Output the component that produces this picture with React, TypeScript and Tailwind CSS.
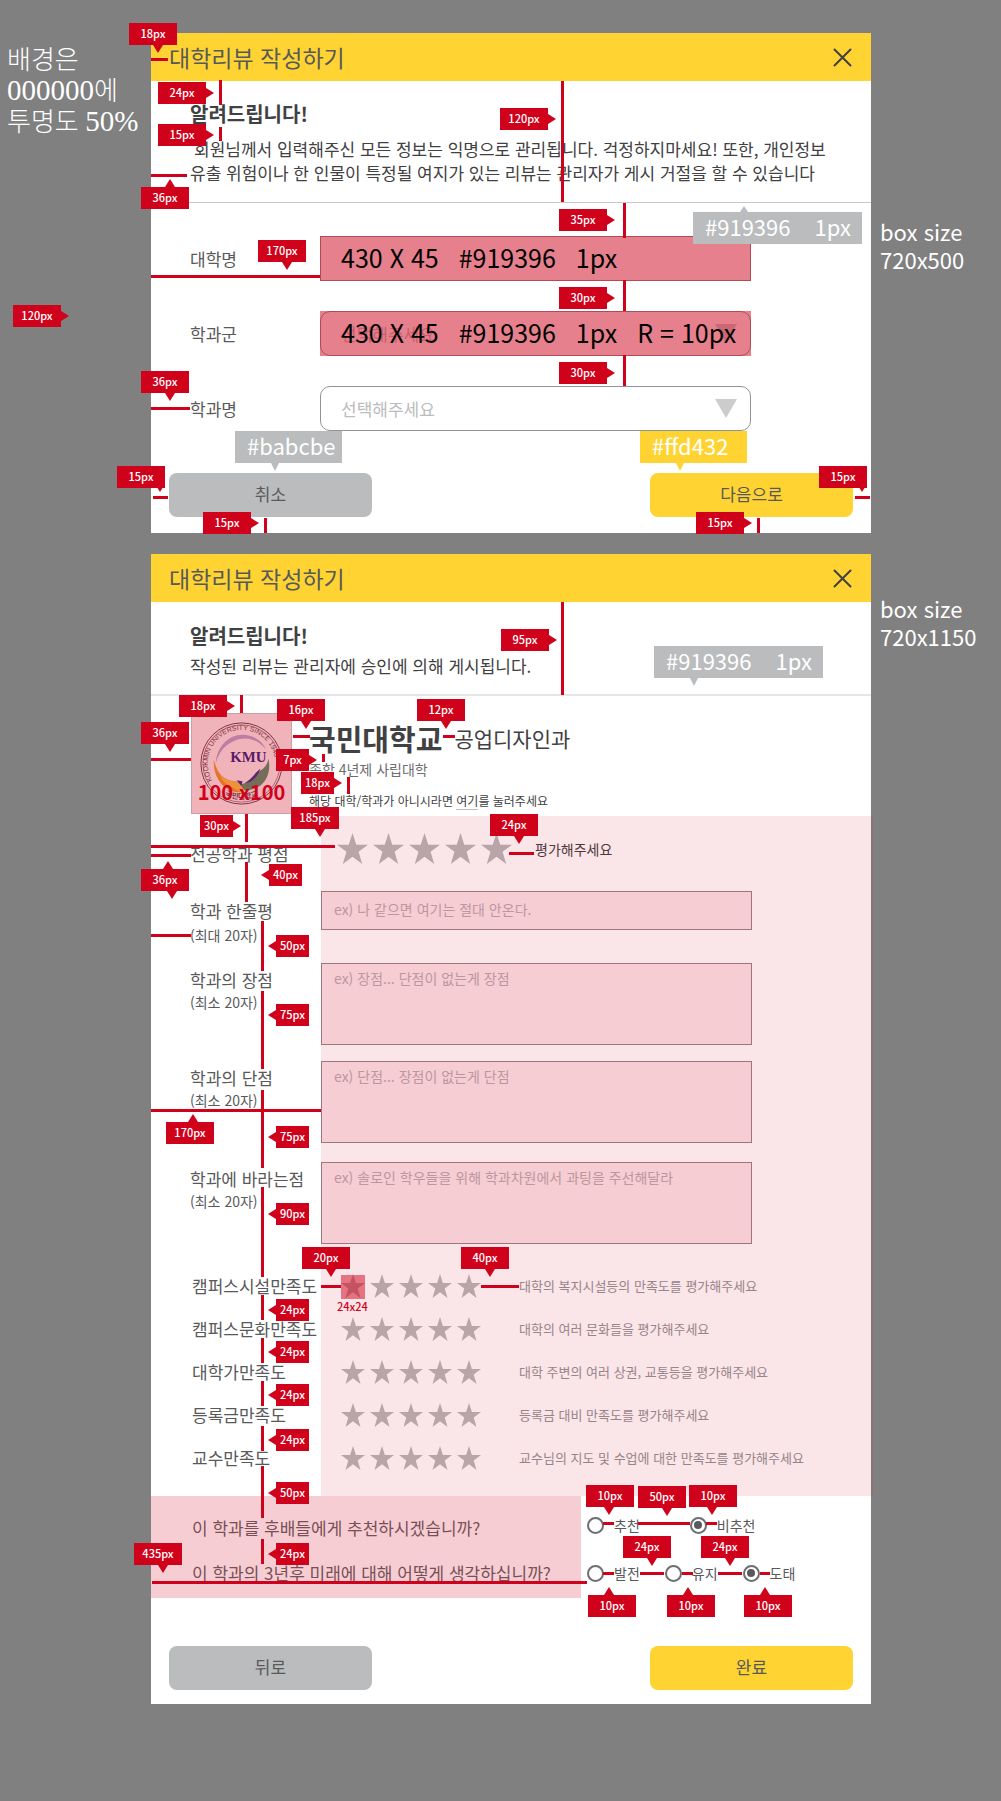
import React from "react";

type Direction = "left" | "right" | "up" | "down";
type TagData = { label: string; dir: Direction; at: string; arrow?: string; narrow?: boolean };

const arrowShape: Record<Direction, string> = {
  right: "left-full top-1.5 border-y-[5px] border-l-8 border-y-transparent border-l-[#d0021b]",
  left: "right-full top-1.5 border-y-[5px] border-r-8 border-y-transparent border-r-[#d0021b]",
  up: "bottom-full border-x-[5px] border-b-8 border-x-transparent border-b-[#d0021b]",
  down: "top-full border-x-[5px] border-t-8 border-x-transparent border-t-[#d0021b]",
};

function Tag({ label, dir, at, arrow = "left-6", narrow }: TagData) {
  const vertical = dir === "up" || dir === "down";
  return (
    <div
      className={`absolute flex h-[22px] items-center justify-center bg-[#d0021b] pb-0.5 text-[11px] leading-none font-medium text-white ${narrow ? "w-[33px]" : "w-12"} ${at}`}
    >
      {label}
      <span className={`absolute ${arrowShape[dir]} ${vertical ? arrow : ""}`} />
    </div>
  );
}

function Annotations({ tags, lines, children }: { tags: TagData[]; lines: string[]; children?: React.ReactNode }) {
  return (
    <div className="pointer-events-none absolute inset-0">
      {lines.map((l) => (
        <span key={l} className={`absolute bg-[#d0021b] ${l}`} />
      ))}
      {children}
      {tags.map((t) => (
        <Tag key={t.at} {...t} />
      ))}
    </div>
  );
}

function ColorTag({ at, color, arrow, children }: { at: string; color: string; arrow: string; children: React.ReactNode }) {
  return (
    <div className={`absolute flex h-8 items-center gap-6 px-3 pb-1 text-[22px] leading-none whitespace-nowrap text-white ${color} ${at}`}>
      {children}
      <span className={`absolute border-x-4 border-x-transparent ${arrow}`} />
    </div>
  );
}

function Header() {
  return (
    <header className="flex h-12 items-center justify-between bg-[#ffd432] pr-[19px] pl-[18px]">
      <h2 className="text-[23px] leading-8 text-[#58595b]">대학리뷰 작성하기</h2>
      <button type="button" aria-label="닫기">
        <svg width="19" height="19" viewBox="0 0 19 19" stroke="#414042" strokeWidth="2" strokeLinecap="round">
          <path d="M1.5 1.5 17.5 17.5M17.5 1.5 1.5 17.5" />
        </svg>
      </button>
    </header>
  );
}

function Actions({ back, next }: { back: string; next: string }) {
  return (
    <div className="flex justify-between px-[18px]">
      <button type="button" className="h-11 w-[203px] rounded-lg bg-[#babcbe] pb-0.5 text-[17px] text-[#58595b]">
        {back}
      </button>
      <button type="button" className="h-11 w-[203px] rounded-lg bg-[#ffd432] pb-0.5 text-[17px] text-[#58595b]">
        {next}
      </button>
    </div>
  );
}

function SelectField({ id }: { id: string }) {
  return (
    <div className="relative">
      <select
        id={id}
        defaultValue=""
        className="h-[45px] w-full appearance-none rounded-[10px] border border-[#919396] bg-white px-5 text-[17px] text-[#babcbe]"
      >
        <option value="">선택해주세요</option>
      </select>
      <svg className="pointer-events-none absolute top-[13px] right-3.5" width="22" height="19" viewBox="0 0 22 19">
        <path d="M0 0H22L11 19Z" fill="#cccccc" />
      </svg>
    </div>
  );
}

function SizeOverlay({ parts }: { parts: string[] }) {
  return (
    <div className="pointer-events-none absolute inset-0 flex items-center gap-5 bg-[#d0021b]/50 pb-0.5 pl-[21px] text-[25px] leading-none whitespace-nowrap text-black">
      {parts.map((p) => (
        <span key={p}>{p}</span>
      ))}
    </div>
  );
}

const step1Tags: TagData[] = [
  { label: "18px", dir: "down", at: "-left-[22px] -top-[10px]" },
  { label: "24px", dir: "right", at: "left-[7px] top-[49px]" },
  { label: "15px", dir: "right", at: "left-[7px] top-[91px]" },
  { label: "36px", dir: "up", at: "-left-[10px] top-[154px]" },
  { label: "170px", dir: "down", at: "left-[107px] top-[207px]" },
  { label: "120px", dir: "right", at: "left-[349px] top-[75px]" },
  { label: "35px", dir: "right", at: "left-[408px] top-[176px]" },
  { label: "30px", dir: "right", at: "left-[408px] top-[254px]" },
  { label: "30px", dir: "right", at: "left-[408px] top-[329px]" },
  { label: "120px", dir: "right", at: "-left-[138px] top-[272px]" },
  { label: "36px", dir: "down", at: "-left-[10px] top-[338px]" },
  { label: "15px", dir: "down", at: "-left-[34px] top-[433px]", arrow: "left-[38px] scale-50 origin-top" },
  { label: "15px", dir: "right", at: "left-[52px] top-[479px]" },
  { label: "15px", dir: "down", at: "left-[668px] top-[433px]", arrow: "left-[38px] scale-50 origin-top" },
  { label: "15px", dir: "right", at: "left-[545px] top-[479px]" },
];

const step1Lines = [
  "left-0 top-[25px] h-[3px] w-[17px]",
  "left-[68px] top-[47px] h-[25px] w-[3px]",
  "left-[68px] top-[94px] h-[14px] w-[3px]",
  "left-0 top-[141px] h-[3px] w-[36px]",
  "left-0 top-[242px] h-[3px] w-[169px]",
  "left-[410px] top-[48px] h-[121px] w-[3px]",
  "left-[472px] top-[170px] h-[35px] w-[3px]",
  "left-[472px] top-[247px] h-[31px] w-[3px]",
  "left-[472px] top-[322px] h-[31px] w-[3px]",
  "left-0 top-[374px] h-[3px] w-[39px]",
  "left-[2px] top-[463px] h-[3px] w-[15px]",
  "left-[113px] top-[485px] h-[15px] w-[3px]",
  "left-[704px] top-[463px] h-[3px] w-[15px]",
  "left-[606px] top-[485px] h-[15px] w-[3px]",
];

function StepOne() {
  return (
    <section className="relative min-w-0 max-w-[720px] flex-1 bg-white pb-4">
      <Header />
      <div className="border-b border-[#c8c8c8] px-[39px] pt-[19px] pb-[17px]">
        <h3 className="text-xl leading-7 font-bold text-[#414042]">알려드립니다!</h3>
        <p className="mt-[9px] indent-1 text-[17px] leading-6 text-[#414042]">
          회원님께서 입력해주신 모든 정보는 익명으로 관리됩니다. 걱정하지마세요! 또한, 개인정보
          <br />
          유출 위험이나 한 인물이 특정될 여지가 있는 리뷰는 관리자가 게시 거절을 할 수 있습니다
        </p>
      </div>
      <form className="flex flex-col pt-[33px]" onSubmit={(e) => e.preventDefault()}>
        <div className="mb-[42px] flex flex-col gap-[30px] pl-[39px] text-[17px] text-[#58595b]">
          <div className="grid grid-cols-[130px_minmax(0,431px)] items-center">
            <label htmlFor="univ">대학명</label>
            <div className="relative">
              <input id="univ" type="text" className="block h-[45px] w-full border border-[#919396] bg-white px-5" />
              <SizeOverlay parts={["430 X 45", "#919396", "1px"]} />
            </div>
          </div>
          <div className="grid grid-cols-[130px_minmax(0,431px)] items-center">
            <label htmlFor="group">학과군</label>
            <div className="relative">
              <SelectField id="group" />
              <SizeOverlay parts={["430 X 45", "#919396", "1px", "R = 10px"]} />
            </div>
          </div>
          <div className="grid grid-cols-[130px_minmax(0,431px)] items-center">
            <label htmlFor="major">학과명</label>
            <SelectField id="major" />
          </div>
        </div>
        <Actions back="취소" next="다음으로" />
      </form>
      <Annotations tags={step1Tags} lines={step1Lines}>
        <ColorTag at="left-[542px] top-[179px] w-[169px]" color="bg-[#babcbe]" arrow="left-[47px] bottom-full border-b-[6px] border-b-[#babcbe]">
          <span>#919396</span>
          <span>1px</span>
        </ColorTag>
        <ColorTag at="left-[84px] top-[398px] w-[107px]" color="bg-[#babcbe]" arrow="left-9 top-full border-t-8 border-t-[#babcbe]">
          #babcbe
        </ColorTag>
        <ColorTag at="left-[489px] top-[398px] w-[107px]" color="bg-[#ffd432]" arrow="left-9 top-full border-t-8 border-t-[#ffd432]">
          #ffd432
        </ColorTag>
      </Annotations>
    </section>
  );
}

function Stars({ name, large }: { name: string; large?: boolean }) {
  return (
    <div role="group" aria-label={name} className="flex gap-[5px]">
      {[1, 2, 3, 4, 5].map((n) => (
        <button key={n} type="button" aria-label={`${n}점`}>
          <svg className={large ? "block h-[31px] w-[31px]" : "block size-6"} viewBox="0 0 24 24" fill="#b6b7b9">
            <path d="M12 0 14.9 9H24L16.7 14.6 19.5 24 12 18.3 4.5 24 7.3 14.6 0 9H9.1Z" />
          </svg>
        </button>
      ))}
    </div>
  );
}

function Emblem() {
  return (
    <div className="relative size-[101px] shrink-0 border border-[#c9a0a6] bg-white">
      <svg viewBox="0 0 100 100" className="size-full" fill="none">
        <defs>
          <path id="ring-top" d="M20.5 67A34 34 0 1 1 79.5 67" />
          <path id="ring-bottom" d="M19 70A38 38 0 0 0 81 70" />
        </defs>
        <circle cx="50" cy="50" r="41" stroke="#5d4a5a" strokeWidth="1" />
        <circle cx="50" cy="50" r="39" stroke="#5d4a5a" strokeWidth=".6" />
        <text fill="#5a4a55" fontSize="7" fontFamily="Liberation Sans">
          <textPath href="#ring-top">KOOKMIN UNIVERSITY SINCE 1946</textPath>
        </text>
        <text fill="#5a4a55" fontSize="7.5" fontWeight="700" textAnchor="middle">
          <textPath href="#ring-bottom" startOffset="50%">국민대학교</textPath>
        </text>
        <path d="M24 50C25 33 37 21 51 21 62 21 71 27 75 36 66 25 54 22 43 27 33 31 27 39 24 50Z" fill="#b5b2e0" />
        <path d="M22 46C25 60 32 67 43 68 50 69 51 73 49 79 36 80 21 68 22 46Z" fill="#f0a52c" />
        <path d="M28 61C36 70 44 66 49 71 54 75 57 73 61 67 59 78 50 81 44 76 38 72 32 71 28 61Z" fill="#f8d24a" />
        <path d="M50 71C59 69 63 62 69 57 75 54 77 48 77 45 81 60 73 75 57 77 53 78 50 75 50 71Z" fill="#4d9b76" />
        <path d="M53 70C60 66 63 60 69 55 67 62 62 69 53 70ZM45 67 51 68 50 73Z" fill="#2c3494" />
        <text x="57" y="48" textAnchor="middle" fill="#23288c" fontSize="15" fontWeight="700" fontFamily="Liberation Serif">
          KMU
        </text>
      </svg>
      <span className="absolute inset-0 bg-[#d0021b]/30" />
      <span className="absolute inset-x-0 bottom-[7px] text-center text-xl leading-7 font-bold whitespace-nowrap text-[#d0021b]">100 x100</span>
    </div>
  );
}

const essays = [
  { id: "pros", label: "학과의 장점", hint: "ex) 장점... 단점이 없는게 장점", row: "h-[98px]" },
  { id: "cons", label: "학과의 단점", hint: "ex) 단점... 장점이 없는게 단점", row: "h-[101px]" },
  { id: "wish", label: "학과에 바라는점", hint: "ex) 솔로인 학우들을 위해 학과차원에서 과팅을 주선해달라", row: "h-[102px]" },
];

const ratings = [
  ["캠퍼스시설만족도", "대학의 복지시설등의 만족도를 평가해주세요"],
  ["캠퍼스문화만족도", "대학의 여러 문화들을 평가해주세요"],
  ["대학가만족도", "대학 주변의 여러 상권, 교통등을 평가해주세요"],
  ["등록금만족도", "등록금 대비 만족도를 평가해주세요"],
  ["교수만족도", "교수님의 지도 및 수업에 대한 만족도를 평가해주세요"],
];

function Radio({ name, label, checked }: { name: string; label: string; checked?: boolean }) {
  return (
    <label className="flex items-center gap-2.5">
      <input
        type="radio"
        name={name}
        defaultChecked={checked}
        className="flex size-[17px] shrink-0 appearance-none items-center justify-center rounded-full border-2 border-[#6d6e71] bg-white checked:before:size-2 checked:before:rounded-full checked:before:bg-[#58595b] checked:before:content-['']"
      />
      {label}
    </label>
  );
}

const step2Tags: TagData[] = [
  { label: "95px", dir: "right", at: "left-[350px] top-[75px]" },
  { label: "18px", dir: "right", at: "left-[28px] top-[141px]" },
  { label: "36px", dir: "down", at: "-left-[10px] top-[168px]" },
  { label: "16px", dir: "down", at: "left-[126px] top-[145px]" },
  { label: "12px", dir: "down", at: "left-[266px] top-[145px]" },
  { label: "7px", dir: "right", at: "left-[125px] top-[195px]", narrow: true },
  { label: "18px", dir: "right", at: "left-[150px] top-[218px]", narrow: true },
  { label: "30px", dir: "right", at: "left-[49px] top-[261px]", narrow: true },
  { label: "185px", dir: "down", at: "left-[140px] top-[253px]" },
  { label: "24px", dir: "down", at: "left-[339px] top-[260px]" },
  { label: "36px", dir: "up", at: "-left-[10px] top-[315px]", arrow: "left-[22px]" },
  { label: "40px", dir: "left", at: "left-[118px] top-[310px]", narrow: true },
  { label: "50px", dir: "left", at: "left-[125px] top-[381px]", narrow: true },
  { label: "75px", dir: "left", at: "left-[125px] top-[450px]", narrow: true },
  { label: "75px", dir: "left", at: "left-[125px] top-[572px]", narrow: true },
  { label: "90px", dir: "left", at: "left-[125px] top-[649px]", narrow: true },
  { label: "170px", dir: "up", at: "left-[15px] top-[568px]", arrow: "left-[22px]" },
  { label: "20px", dir: "down", at: "left-[151px] top-[693px]" },
  { label: "40px", dir: "down", at: "left-[310px] top-[693px]" },
  { label: "24px", dir: "left", at: "left-[125px] top-[745px]", narrow: true },
  { label: "24px", dir: "left", at: "left-[125px] top-[787px]", narrow: true },
  { label: "24px", dir: "left", at: "left-[125px] top-[830px]", narrow: true },
  { label: "24px", dir: "left", at: "left-[125px] top-[875px]", narrow: true },
  { label: "50px", dir: "left", at: "left-[125px] top-[928px]", narrow: true },
  { label: "24px", dir: "left", at: "left-[125px] top-[989px]", narrow: true },
  { label: "435px", dir: "down", at: "-left-[17px] top-[989px]" },
  { label: "10px", dir: "down", at: "left-[435px] top-[931px]", arrow: "left-[18px]" },
  { label: "50px", dir: "down", at: "left-[487px] top-[932px]" },
  { label: "10px", dir: "down", at: "left-[538px] top-[931px]", arrow: "left-[18px]" },
  { label: "24px", dir: "down", at: "left-[472px] top-[982px]" },
  { label: "24px", dir: "down", at: "left-[550px] top-[982px]" },
  { label: "10px", dir: "up", at: "left-[437px] top-[1041px]", arrow: "left-4" },
  { label: "10px", dir: "up", at: "left-[516px] top-[1041px]", arrow: "left-4" },
  { label: "10px", dir: "up", at: "left-[593px] top-[1041px]", arrow: "left-4" },
];

const step2Lines = [
  "left-[410px] top-[48px] h-[93px] w-[3px]",
  "left-[89px] top-[141px] h-[18px] w-[3px]",
  "left-0 top-[204px] h-[3px] w-[40px]",
  "left-[142px] top-[181px] h-[3px] w-[17px]",
  "left-[292px] top-[181px] h-[3px] w-[12px]",
  "left-[171px] top-[200px] h-[8px] w-[3px]",
  "left-[196px] top-[223px] h-[17px] w-[3px]",
  "left-[94px] top-[260px] h-[28px] w-[3px]",
  "left-0 top-[291px] h-[3px] w-[184px]",
  "left-0 top-[300px] h-[3px] w-[40px]",
  "left-[94px] top-[308px] h-[40px] w-[3px]",
  "left-[110px] top-[367px] h-[50px] w-[3px]",
  "left-[110px] top-[437px] h-[78px] w-[3px]",
  "left-0 top-[380px] h-[3px] w-[40px]",
  "left-[358px] top-[298px] h-[3px] w-[25px]",
  "left-0 top-[555px] h-[3px] w-[170px]",
  "left-[110px] top-[536px] h-[78px] w-[3px]",
  "left-[110px] top-[633px] h-[90px] w-[3px]",
  "left-[110px] top-[741px] h-[25px] w-[3px]",
  "left-[110px] top-[784px] h-[25px] w-[3px]",
  "left-[110px] top-[827px] h-[25px] w-[3px]",
  "left-[110px] top-[872px] h-[25px] w-[3px]",
  "left-[110px] top-[912px] h-[52px] w-[3px]",
  "left-[110px] top-[985px] h-[25px] w-[3px]",
  "left-[170px] top-[731px] h-[3px] w-[20px]",
  "left-[330px] top-[731px] h-[3px] w-[38px]",
  "left-px top-[1027px] h-[3px] w-[435px]",
  "left-[452px] top-[968px] h-[3px] w-[11px]",
  "left-[487px] top-[968px] h-[3px] w-[52px]",
  "left-[555px] top-[968px] h-[3px] w-[11px]",
  "left-[452px] top-[1018px] h-[3px] w-[11px]",
  "left-[489px] top-[1018px] h-[3px] w-[24px]",
  "left-[531px] top-[1018px] h-[3px] w-[11px]",
  "left-[567px] top-[1018px] h-[3px] w-[24px]",
  "left-[609px] top-[1018px] h-[3px] w-[10px]",
];

function StepTwo() {
  return (
    <section className="relative min-w-0 max-w-[720px] flex-1 bg-white pb-3.5">
      <Header />
      <div className="border-b-2 border-[#e6e6e6] px-[39px] pt-5 pb-4">
        <h3 className="text-xl leading-7 font-bold text-[#414042]">알려드립니다!</h3>
        <p className="mt-1 text-[17px] leading-6 text-[#414042]">작성된 리뷰는 관리자에 승인에 의해 게시됩니다.</p>
      </div>

      <div className="flex gap-[17px] px-10 pt-[17px] pb-0.5">
        <Emblem />
        <div className="pt-[9px] text-[#414042]">
          <div className="flex items-center gap-3 leading-8">
            <strong className="text-[29px]">국민대학교</strong>
            <span className="text-[21px]">공업디자인과</span>
          </div>
          <p className="mt-[5px] text-sm leading-5 text-[#6d6e71]">종합 4년제 사립대학</p>
          <p className="mt-[13px] text-xs leading-[18px]">
            해당 대학/학과가 아니시라면{" "}
            <a href="#" className="border-b border-[#babcbe]">
              여기
            </a>
            를 눌러주세요
          </p>
        </div>
      </div>

      <form onSubmit={(e) => e.preventDefault()}>
        <div className="relative pb-[17px] text-[17px] text-[#58595b]">
          <div className="grid h-[75px] grid-cols-[131px_1fr] pl-[39px]">
            <span className="pt-[26px] leading-6">전공학과 평점</span>
            <div className="mt-[17px] flex h-[31px] items-center gap-[23px] pl-4">
              <Stars name="전공학과 평점" large />
              <span className="text-sm text-[#414042]">평가해주세요</span>
            </div>
          </div>

          <div className="grid h-[72px] grid-cols-[131px_minmax(0,431px)] items-start pl-[39px]">
            <label htmlFor="oneline" className="pt-2 leading-6">
              학과 한줄평
              <small className="mt-0.5 block text-sm leading-5">(최대 20자)</small>
            </label>
            <div className="relative">
              <input
                id="oneline"
                type="text"
                placeholder="ex) 나 같으면 여기는 절대 안온다."
                className="block h-[39px] w-full border border-[#919396] bg-white px-3 pb-1 text-sm placeholder:text-[#babcbe]"
              />
              <span className="pointer-events-none absolute inset-0 bg-[#d0021b]/10" />
            </div>
          </div>

          {essays.map((e) => (
            <div key={e.id} className={`grid grid-cols-[131px_minmax(0,431px)] items-start pl-[39px] ${e.row}`}>
              <label htmlFor={e.id} className="pt-[5px] leading-6">
                {e.label}
                <small className="block text-sm leading-5">(최소 20자)</small>
              </label>
              <div className="relative">
                <textarea
                  id={e.id}
                  placeholder={e.hint}
                  className="block h-[82px] w-full resize-none border border-[#919396] bg-white px-3 py-1 text-sm leading-5 placeholder:text-[#babcbe]"
                />
                <span className="pointer-events-none absolute inset-0 bg-[#d0021b]/10" />
              </div>
            </div>
          ))}

          {ratings.map(([name, hint]) => (
            <div key={name} className="flex h-[43px] items-center pl-[41px]">
              <span className="w-[129px] shrink-0 whitespace-nowrap">{name}</span>
              <div className="w-[198px] shrink-0 pl-5">
                <Stars name={name} />
              </div>
              <span className="text-[13px] text-[#919396]">{hint}</span>
            </div>
          ))}
          <span className="pointer-events-none absolute inset-y-0 -right-0.5 left-[170px] bg-[#d0021b]/10" />
        </div>

        <div className="mb-12 flex">
          <div className="flex w-[430px] shrink-0 flex-col gap-[21px] bg-[#f6cdd3] pt-5 pb-[13px] pl-[41px] text-[17px] leading-6 whitespace-nowrap text-[#784f56]">
            <p id="q-recommend">이 학과를 후배들에게 추천하시겠습니까?</p>
            <p id="q-future">이 학과의 3년후 미래에 대해 어떻게 생각하십니까?</p>
          </div>
          <div className="flex flex-col gap-6 pt-[17px] pl-1.5 text-sm leading-6 whitespace-nowrap text-[#58595b]">
            <div role="radiogroup" aria-labelledby="q-recommend" className="flex gap-[50px]">
              <Radio name="recommend" label="추천" />
              <Radio name="recommend" label="비추천" checked />
            </div>
            <div role="radiogroup" aria-labelledby="q-future" className="flex gap-[25px]">
              <Radio name="future" label="발전" />
              <Radio name="future" label="유지" />
              <Radio name="future" label="도태" checked />
            </div>
          </div>
        </div>
        <Actions back="뒤로" next="완료" />
      </form>

      <Annotations tags={step2Tags} lines={step2Lines}>
        <ColorTag at="left-[503px] top-[92px] w-[169px]" color="bg-[#babcbe]" arrow="left-9 top-full border-t-8 border-t-[#babcbe]">
          <span>#919396</span>
          <span>1px</span>
        </ColorTag>
        <span className="absolute top-[337px] left-4 border-x-[5px] border-t-8 border-x-transparent border-t-[#d0021b]" />
        <span className="absolute top-[721px] left-[190px] size-6 bg-[#d0021b]/50" />
        <span className="absolute top-[744px] left-[186px] text-[11px] leading-4 font-medium text-[#d0021b]">24x24</span>
      </Annotations>
    </section>
  );
}

export default function App() {
  return (
    <main
      lang="ko"
      className="flex min-h-screen flex-col gap-[21px] overflow-hidden bg-[#808080] pt-[33px] pb-24 [font-family:'Noto_Sans_CJK_KR',sans-serif]"
    >
      <div className="flex">
        <aside className="w-[151px] shrink-0 pt-[13px] pl-[7px] text-[26px] leading-[30px] whitespace-nowrap text-white [font-family:'Liberation_Serif','Noto_Sans_CJK_KR',serif]">
          <p className="font-light">
            배경은
            <br />
            <span className="text-[29px] leading-none">000000</span>에
            <br />
            투명도 <span className="text-[29px] leading-none">50%</span>
          </p>
        </aside>
        <StepOne />
        <aside className="w-[130px] shrink-0 pt-[184px] pl-[9px] text-[22px] leading-7 text-white">
          box size
          <br />
          720x500
        </aside>
      </div>
      <div className="flex">
        <div className="w-[151px] shrink-0" />
        <StepTwo />
        <aside className="w-[130px] shrink-0 pt-10 pl-[9px] text-[22px] leading-7 text-white">
          box size
          <br />
          720x1150
        </aside>
      </div>
    </main>
  );
}
